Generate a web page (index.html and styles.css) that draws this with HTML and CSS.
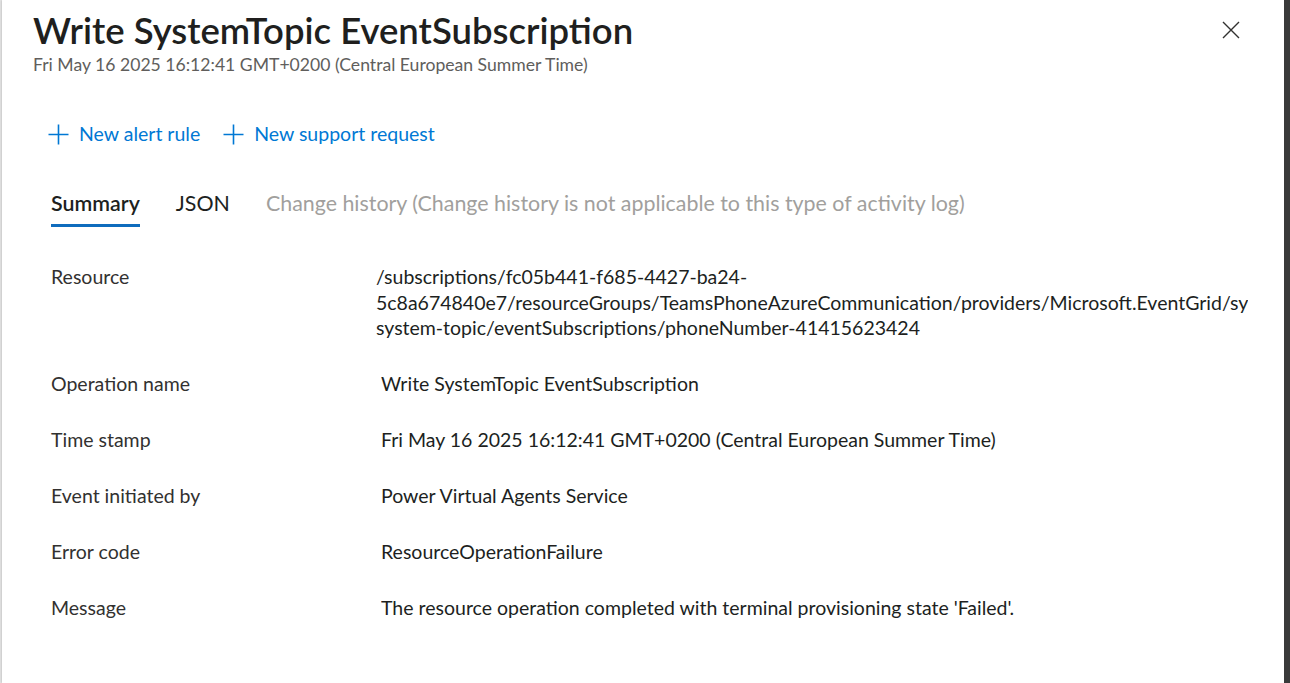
FILE: index.html
```html
<!DOCTYPE html>
<html lang="en">
<head>
<meta charset="utf-8">
<title>Write SystemTopic EventSubscription</title>
<link rel="stylesheet" href="styles.css">
</head>
<body>
<div class="backdrop-left"></div>
<main class="panel">
  <header class="panel-header">
    <div class="titles">
      <h1 class="title">Write SystemTopic EventSubscription</h1>
      <div class="subtitle">Fri May 16 2025 16:12:41 GMT+0200 (Central European Summer Time)</div>
    </div>
    <button class="close" aria-label="Close">
      <svg width="18" height="18" viewBox="0 0 18 18"><path d="M1 1 L17 17 M17 1 L1 17" stroke="#323130" stroke-width="1.4" fill="none"/></svg>
    </button>
  </header>
  <nav class="commands">
    <a class="cmd"><svg width="21" height="21" viewBox="0 0 21 21"><path d="M10.5 0.5 V20.5 M0.5 10.5 H20.5" stroke="#0078d4" stroke-width="1.6" fill="none"/></svg><span>New alert rule</span></a>
    <a class="cmd"><svg width="21" height="21" viewBox="0 0 21 21"><path d="M10.5 0.5 V20.5 M0.5 10.5 H20.5" stroke="#0078d4" stroke-width="1.6" fill="none"/></svg><span>New support request</span></a>
  </nav>
  <div class="tabs">
    <div class="tab active">Summary</div>
    <div class="tab">JSON</div>
    <div class="tab disabled">Change history (Change history is not applicable to this type of activity log)</div>
  </div>
  <dl class="details">
    <dt>Resource</dt>
    <dd class="resource">/subscriptions/fc05b441-f685-4427-ba24-5c8a674840e7/resourceGroups/TeamsPhoneAzureCommunication/providers/Microsoft.EventGrid/systemTopics/teamsphoneazurecommunication-system-topic/eventSubscriptions/phoneNumber-41415623424</dd>
    <dt>Operation name</dt>
    <dd>Write SystemTopic EventSubscription</dd>
    <dt>Time stamp</dt>
    <dd>Fri May 16 2025 16:12:41 GMT+0200 (Central European Summer Time)</dd>
    <dt>Event initiated by</dt>
    <dd>Power Virtual Agents Service</dd>
    <dt>Error code</dt>
    <dd>ResourceOperationFailure</dd>
    <dt>Message</dt>
    <dd>The resource operation completed with terminal provisioning state 'Failed'.</dd>
  </dl>
</main>
<div class="backdrop-right"></div>
</body>
</html>
```
FILE: styles.css
```css
html, body {
  margin: 0;
  padding: 0;
  height: 100%;
}
body {
  display: flex;
  background: #3a3a3a;
  font-family: "Segoe UI", Lato, "Noto Sans", sans-serif;
  color: #323130;
  overflow: hidden;
}
.backdrop-left {
  width: 2px;
  flex: none;
  background: #e8e8e8;
}
.backdrop-right {
  width: 6px;
  flex: none;
  background: #3a3a3a;
}
.panel {
  flex: 1;
  background: #fff;
  min-width: 0;
  box-shadow: -1px 0 2px rgba(0,0,0,0.15);
}
.panel-header {
  display: flex;
  justify-content: space-between;
  align-items: flex-start;
  padding: 10px 44px 0 31px;
}
.title {
  margin: 0;
  font-size: 36.5px;
  font-weight: 600;
  line-height: 40px;
  color: #201f1e;
}
.subtitle {
  font-size: 17.6px;
  line-height: 24px;
  margin-top: 3px;
  color: #605e5c;
}
.close {
  background: none;
  border: 0;
  padding: 0;
  margin-top: 11px;
  width: 18px;
  height: 18px;
}
.commands {
  display: flex;
  gap: 23px;
  padding: 0 0 0 46px;
  margin-top: 43px;
}
.cmd {
  display: flex;
  align-items: center;
  gap: 10px;
  color: #0078d4;
  font-size: 19.5px;
  line-height: 28px;
}
.tabs {
  display: flex;
  gap: 36px;
  padding-left: 49px;
  margin-top: 40px;
}
.tab {
  font-size: 21.4px;
  line-height: 30px;
  padding-bottom: 6px;
  border-bottom: 3px solid transparent;
  color: #201f1e;
}
.tab.active {
  font-weight: 600;
  border-bottom-color: #0f6cbd;
}
.tab.disabled {
  color: #a19f9d;
}
.details {
  display: grid;
  grid-template-columns: 330px 1fr;
  margin: 37px 0 0 49px;
  row-gap: 30.5px;
  font-size: 19.5px;
  line-height: 25.5px;
}
.details dt {
  margin: 0;
  color: #323130;
}
.details dd {
  margin: 0;
  color: #201f1e;
  overflow: hidden;
  max-width: 866px;
}
.details dd.resource {
  margin-left: -5px;
  max-width: 872px;
}
```
